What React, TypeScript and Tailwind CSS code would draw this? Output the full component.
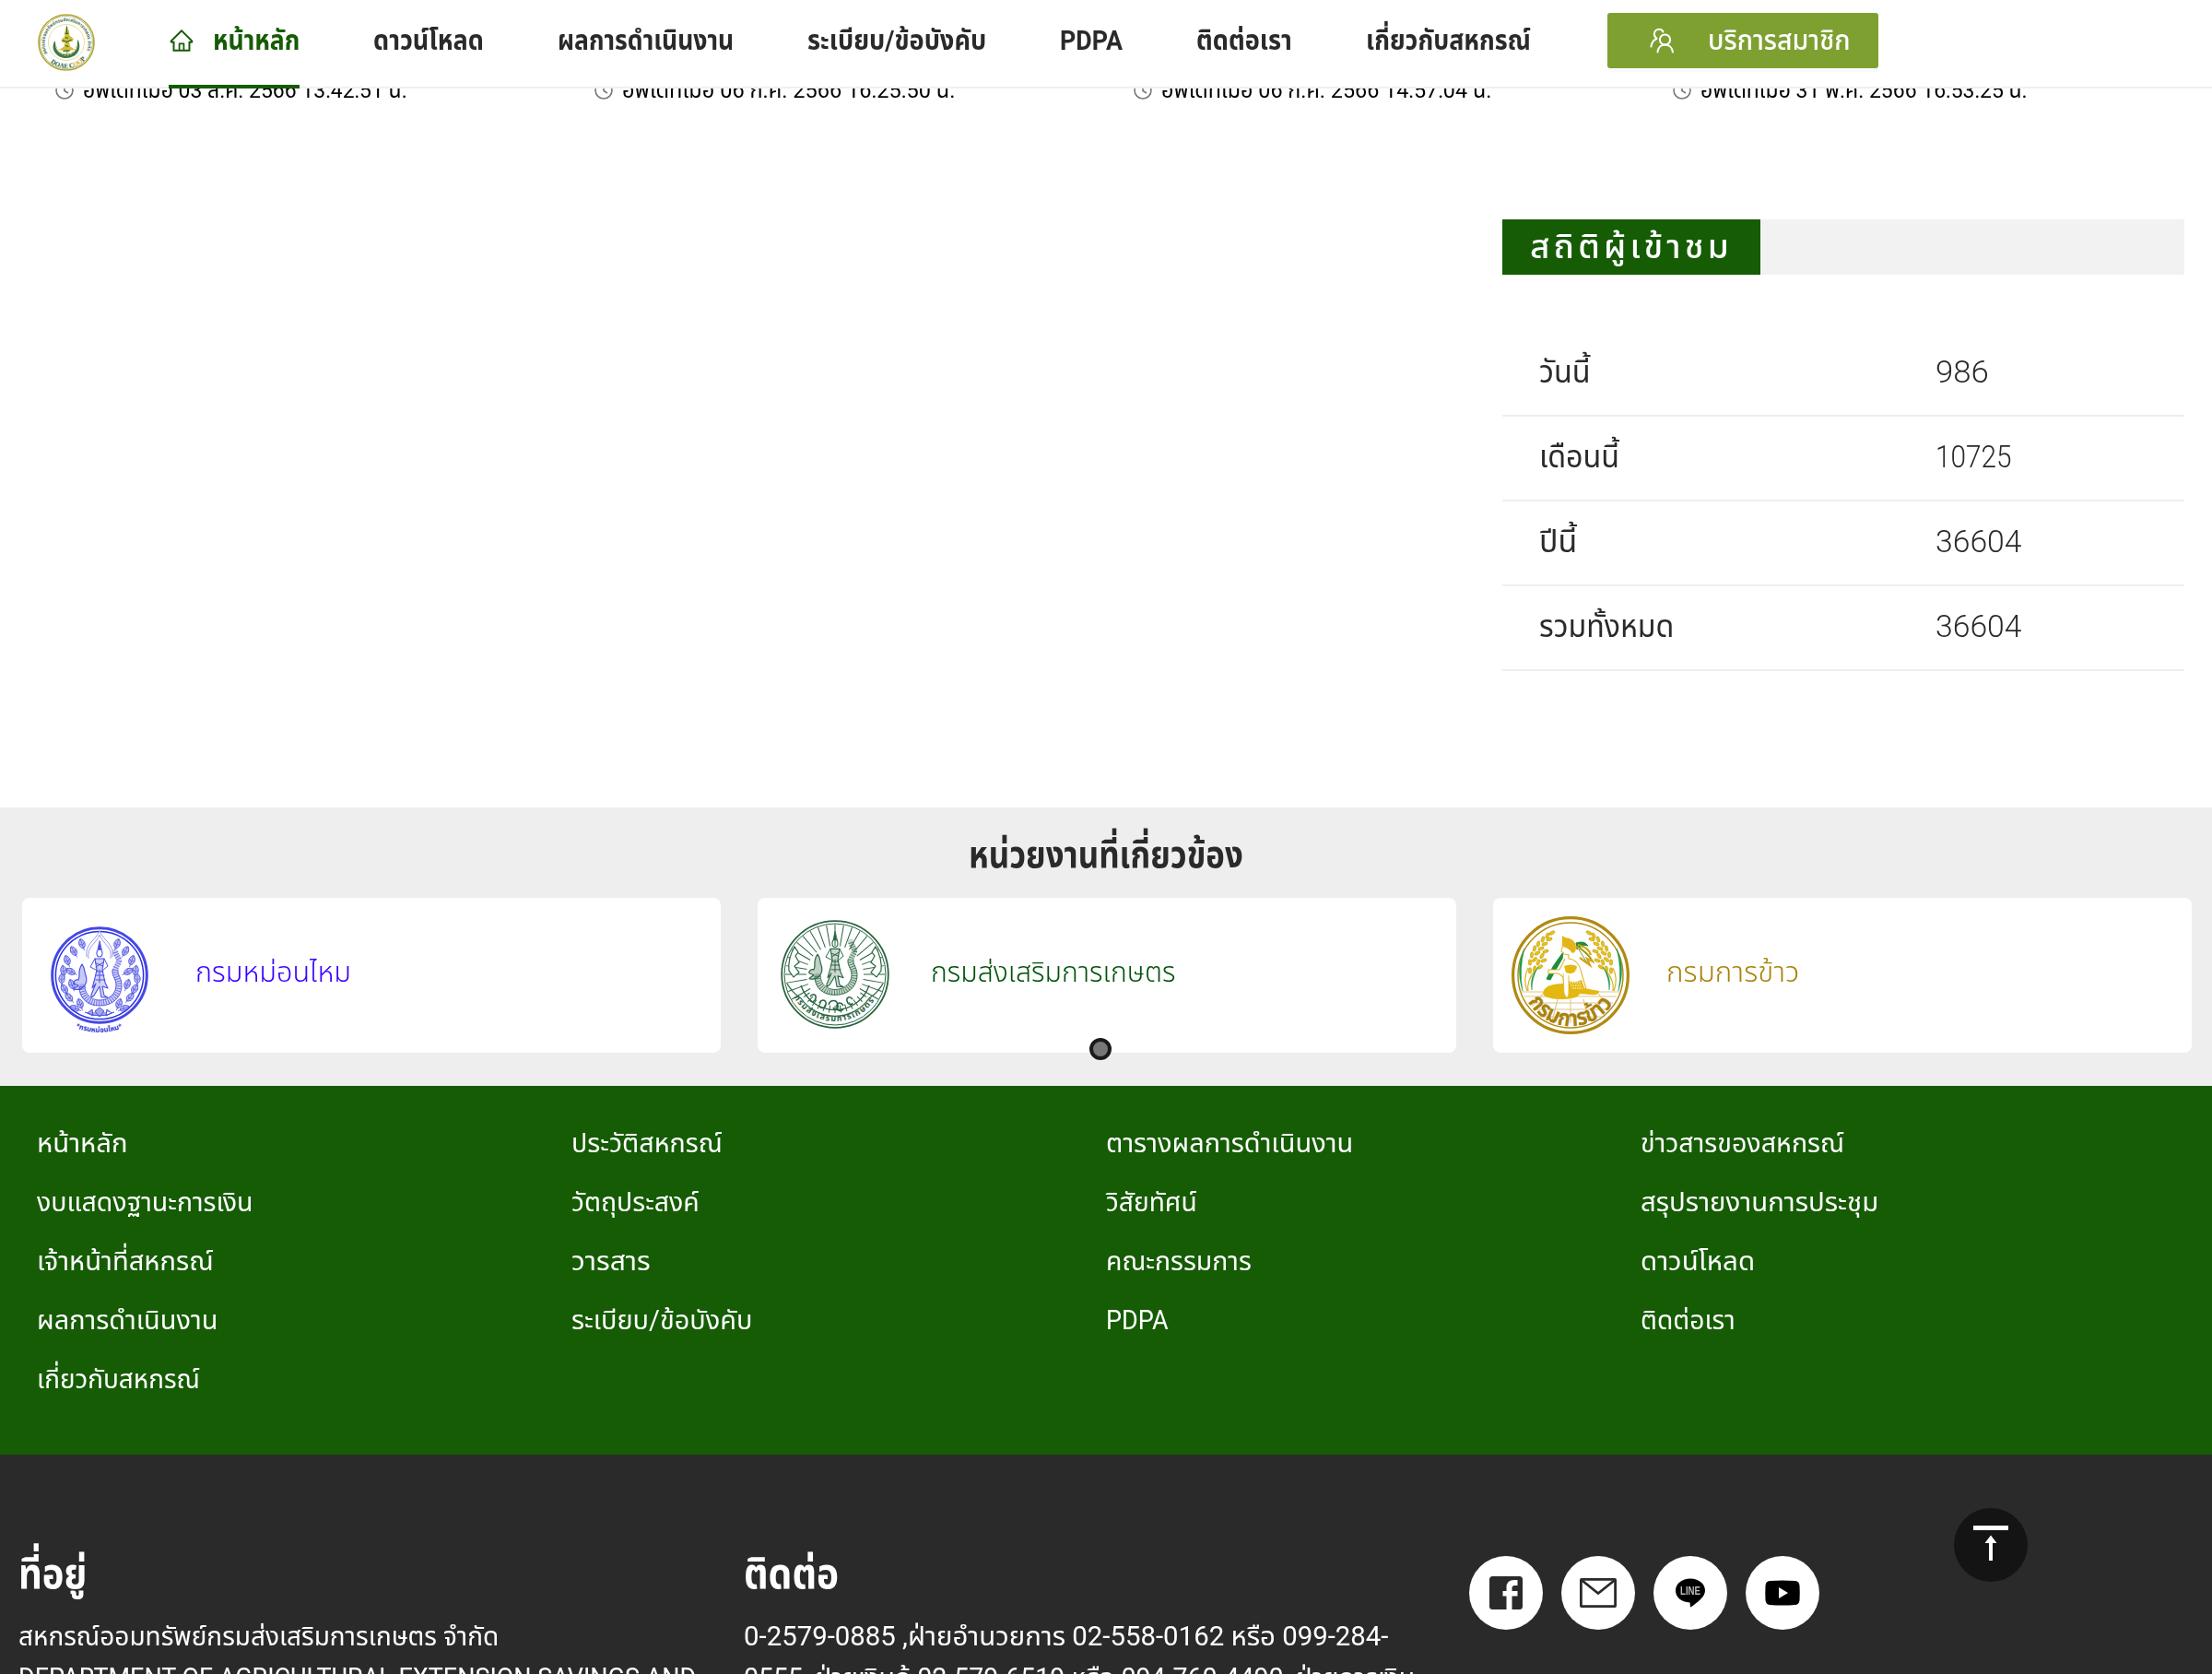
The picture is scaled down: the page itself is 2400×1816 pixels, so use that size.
import React, { useLayoutEffect, useRef, useState } from "react";
import { AiOutlineHome } from "react-icons/ai";

type FitProps = { w: number; className?: string; children: React.ReactNode };

/** Single-line label whose glyph run is condensed or widened to a set width. */
function Fit({ w, className = "", children }: FitProps) {
  const ref = useRef<HTMLSpanElement>(null);
  const [scale, setScale] = useState(1);
  useLayoutEffect(() => {
    if (ref.current) setScale(w / ref.current.offsetWidth);
  }, [w]);
  return (
    <span className={`block whitespace-nowrap ${className}`} style={{ width: w }}>
      <span ref={ref} className="inline-block origin-left" style={{ transform: `scaleX(${scale})` }}>
        {children}
      </span>
    </span>
  );
}

const nav: [string, number][] = [
  ["ดาวน์โหลด", 120],
  ["ผลการดำเนินงาน", 191],
  ["ระเบียบ/ข้อบังคับ", 194],
  ["PDPA", 68],
  ["ติดต่อเรา", 104],
  ["เกี่ยวกับสหกรณ์", 179],
];

const updates: [string, number][] = [
  ["อัพเดทเมื่อ 03 ส.ค. 2566 13:42:51 น.", 352],
  ["อัพเดทเมื่อ 06 ก.ค. 2566 16:25:50 น.", 361],
  ["อัพเดทเมื่อ 06 ก.ค. 2566 14:57:04 น.", 358],
  ["อัพเดทเมื่อ 31 พ.ค. 2566 16:53:25 น.", 355],
];

const stats: [string, number, string, number][] = [
  ["วันนี้", 56, "986", 58],
  ["เดือนนี้", 87, "10725", 83],
  ["ปีนี้", 41, "36604", 94],
  ["รวมทั้งหมด", 146, "36604", 94],
];

const links: [string, number][] = [
  ["หน้าหลัก", 99], ["ประวัติสหกรณ์", 164], ["ตารางผลการดำเนินงาน", 268], ["ข่าวสารของสหกรณ์", 221],
  ["งบแสดงฐานะการเงิน", 235], ["วัตถุประสงค์", 139], ["วิสัยทัศน์", 99], ["สรุปรายงานการประชุม", 258],
  ["เจ้าหน้าที่สหกรณ์", 192], ["วารสาร", 86], ["คณะกรรมการ", 158], ["ดาวน์โหลด", 124],
  ["ผลการดำเนินงาน", 196], ["ระเบียบ/ข้อบังคับ", 196], ["PDPA", 68], ["ติดต่อเรา", 103],
  ["เกี่ยวกับสหกรณ์", 177],
];

function Naga({ color }: { color: string }) {
  return (
    <g fill="none" stroke={color} strokeLinecap="round" strokeLinejoin="round">
      <path d="M-19 12c0 12 9 19 19 18c13 0 21-9 21-19c0-8-5-11-4-17c1-5 5-7 4-11c-1-3-3-5-4-9" strokeWidth="6" strokeOpacity=".25" />
      <path d="M-19 12c0 12 9 19 19 18c13 0 21-9 21-19c0-8-5-11-4-17c1-5 5-7 4-11c-1-3-3-5-4-9" strokeWidth="6" strokeDasharray=".9 1.7" strokeLinecap="butt" strokeOpacity=".8" />
      <path d="M-16 11c0 11 8 16 16 16c11 0 18-8 18-16c0-8-5-10-4-17" strokeWidth=".9" />
      <path d="M-22 13c0 13 10 20 22 20c15 0 24-10 24-22c0-9-5-11-4-17" strokeWidth=".9" />
      <path d="M-19-12c-6 9-1 11-4 17c-3-1-6 2-5 4l5 2c-2 2-4 2-5 4c4 1 7 1 10-2c4-4 5-8 3-13c-2-4 0-7-4-12z" fill={color} fillOpacity=".3" strokeWidth="1.2" />
      <path d="M0-37L-2-28H2Z" fill={color} strokeWidth=".8" />
      <ellipse cx="0" cy="-24" rx="3" ry="4" strokeWidth="1.1" />
      <path d="M-5-18H5L3-6L6 8L9 14L3 12L5 22L9 24H2L0 12L-6 22L-9 24V21L-4 9L-8 14L-5 3L-3-6Z" fill={color} fillOpacity=".25" strokeWidth="1.1" />
      <path d="M-5-18L-10-9L-2-5M5-18L9-10L3-5M-4-13L4-10M4-14L-4-9M-3-4H4M-4 0H5M-4 5L6 5M0-6V8" strokeWidth="1" />
    </g>
  );
}

function Leaf({ x, y, r, color, s = 1 }: { x: number; y: number; r: number; color: string; s?: number }) {
  return (
    <g transform={`translate(${x} ${y}) rotate(${r}) scale(${s})`}>
      <path d="M0-7C5-3 5 3 0 6C-5 3-5-3 0-7Z" fill={color} fillOpacity=".35" stroke={color} strokeWidth="1" />
      <path d="M0-6V9M-3-1L0 2L3-1" fill="none" stroke={color} strokeWidth=".8" />
    </g>
  );
}

function CoopLogo() {
  return (
    <svg viewBox="-31 -31 62 62" className="size-[62px]">
      <defs>
        <path id="coop-top" d="M-20.500 12A23.500 23.500 0 1 1 20.500 12" />
        <path id="coop-bottom" d="M-20 19A27 27 0 0 0 20 19" />
      </defs>
      <circle r="30" fill="#fff" stroke="#b5a52f" strokeWidth="1.600" />
      <circle r="28.500" fill="none" stroke="#7f9a54" strokeWidth=".6" />
      <circle r="19.500" fill="none" stroke="#e3d48c" strokeWidth=".8" />
      <g transform="translate(0 1) scale(.46)">
        <path d="M-27-6c-12 18 2 40 27 41c26-1 38-22 27-44c-3 10 2 22-9 29c-9 7-28 7-36 0c-9-7-6-17-9-26z" fill="#3c7a4b" />
        <path d="M-24 8c6 14 16 20 24 20s19-6 24-21" fill="none" stroke="#dccb50" strokeWidth="3" strokeDasharray="4 3" />
        <path d="M1-40l-5 14v9l-8 9 3 7 6-3-3 12-12 8 14 1 6 8 5-8 13-2-11-8-3-12 8 1 3-7-10-8v-8z" fill="#d2bd3c" />
        <path d="M1-40v18M-3-23h8M-10-7l11 4 11-5M-2 5l7 3M-8 18l16-1M-2-14l6 2" stroke="#2c6b3e" strokeWidth="2.600" fill="none" />
      </g>
      <text fontSize="5.200" fontWeight="700" fill="#4c7148">
        <textPath href="#coop-top" textLength="94" lengthAdjust="spacingAndGlyphs">สหกรณ์ออมทรัพย์กรมส่งเสริมการเกษตร จำกัด</textPath>
      </text>
      <text fontFamily="Liberation Serif" fontSize="7" fontWeight="700" fill="#23603a">
        <textPath href="#coop-bottom" startOffset="4">DOAE C<tspan fill="#dda51d">OO</tspan>P</textPath>
      </text>
    </svg>
  );
}

function SilkLogo() {
  const c = "#4a4fe0";
  const leaves: [number, number, number][] = [
    [19, -34, 20], [28, -26, 30], [35, -16, 20], [39, -5, 10], [31, -4, 60], [41, 4, 0], [30, 10, 20], [38, 15, 30], [33, 24, 40], [21, 31, 20], [27, 36, 70],
  ];
  return (
    <svg viewBox="-53 -53 106 118" className="h-[118px] w-[106px]">
      <defs><path id="silk-name" d="M-26 57Q0 67 26 57" /></defs>
      <circle r="51.300" fill="none" stroke="#4448e4" strokeWidth="3" />
      <circle r="47.600" fill="none" stroke="#2b2fe8" strokeWidth="1.500" />
      {leaves.map(([x, y, r], i) => (
        <g key={i}>
          <Leaf x={x} y={y} r={r} color={c} s={0.85} />
          <Leaf x={-x} y={y} r={-r} color={c} s={0.85} />
        </g>
      ))}
      <path d="M-12-18c-2-14 8-15 12-26c4 11 14 12 12 26M-14-20c-2-14 9-17 14-28c5 11 16 14 14 28" fill="none" stroke="#9a9dee" strokeWidth="1" />
      <Naga color={c} />
      <path d="M-16 40q16 8 32 0M0 35l-5 4 5 6 5-6zM-8 37l-5 4 6 3zM8 37l5 4-6 3z" fill={c} fillOpacity=".5" stroke={c} strokeWidth="1" />
      <text fontSize="8" fontWeight="700" fill="#2f34d8">
        <textPath href="#silk-name" textLength="52" lengthAdjust="spacingAndGlyphs">*กรมหม่อนไหม*</textPath>
      </text>
    </svg>
  );
}

function ExtensionLogo() {
  const c = "#2a6440";
  const rays = Array.from({ length: 25 }, (_, i) => -120 + i * 10);
  const low = Array.from({ length: 13 }, (_, i) => 126 + i * 9);
  return (
    <svg viewBox="-59 -59 118 118" className="size-[118px]">
      <defs><path id="ext-name" d="M-46 22A51 51 0 0 0 46 22" /></defs>
      <circle r="57.800" fill="none" stroke={c} strokeWidth="1.800" />
      <circle r="55" fill="none" stroke={c} strokeWidth="1" />
      {rays.map((a) => <path key={a} d="M0-31V-54" transform={`rotate(${a})`} stroke={c} strokeWidth="1" />)}
      {low.map((a) => <path key={a} d="M0-34V-42" transform={`rotate(${a})`} stroke={c} strokeWidth="1" />)}
      <path d="M-52 10A46 46 0 0 0-37 26A45 45 0 0 0 37 26A46 46 0 0 0 52 10M-37 12A39 39 0 0 0 37 12" fill="none" stroke={c} strokeWidth="1.300" />
      <path d="M-44-30c-5 9-7 17-6 26l5 7 6-5-5-7 5-4-4-7 3-4zM44-30c5 9 7 17 6 26l-5 7-6-5 5-7-5-4 4-7-3-4z" fill="#fff" stroke={c} strokeWidth="1.200" />
      <path d="M-27 24c3-4 7-2 6 2s-5 5-6 2m10 3c3-5 8-3 7 2s-6 4-7 1m10-1c2-6 9-6 10 0s-4 6-5 3m21-9c-3-4-7-2-6 2s5 5 6 2m-10 3c-3-5-8-3-7 2s6 4 7 1" fill="none" stroke={c} strokeWidth="1.500" />
      <g transform="translate(0 -10) scale(1 .98)"><Naga color={c} /></g>
      <text fontSize="9" fontWeight="700" fill={c}>
        <textPath href="#ext-name" startOffset="3" textLength="104" lengthAdjust="spacing">กรมส่งเสริมการเกษตร</textPath>
      </text>
    </svg>
  );
}

function RiceLogo() {
  const grains: [number, number, number][] = [
    [-20, -46, 60], [-25, -43, 20], [-23, -39, 70], [-30, -39, 20], [-28, -34, 70], [-35, -34, 10], [-32, -29, 70], [-39, -29, 10], [-36, -24, 60], [-42, -22, 5], [-39, -17, 50], [-44, -14, 0], [-27, -26, 70], [-31, -21, 30], [-29, -16, 70], [-35, -14, 20], [-33, -9, 60], [-39, -7, 10], [-44, -5, 0],
  ];
  return (
    <svg viewBox="-64 -64 128 128" className="size-[128px]">
      <defs><path id="rice-name" d="M-47 27A54 54 0 0 0 48 27" /></defs>
      <circle r="62.400" fill="#fff" stroke="#b08a12" strokeWidth="3.200" />
      <circle r="57" fill="none" stroke="#b08a12" strokeWidth="1.400" />
      {[1, -1].map((s) => (
        <g key={s} transform={`scale(${s} 1)`}>
          {grains.map(([x, y, r], i) => (
            <ellipse key={i} cx={x} cy={y} rx="1.700" ry="3.300" fill="#e6c21b" stroke="#b8960f" strokeWidth=".5" transform={`rotate(${r} ${x} ${y})`} />
          ))}
          <path d="M-46-8Q-52 4-47 17M-38-6Q-48 6-46 17" fill="none" stroke="#d8b426" strokeWidth="1.200" />
          <path d="M-50-29Q-60-8-52 17Q-56-6-50-29ZM-35-9Q-45 2-42 16Q-42 2-35-9Z" fill="#1f9a4a" stroke="#1f9a4a" strokeWidth=".5" />
        </g>
      ))}
      <path d="M-54 18H-30M30 18H54M-50 23H50M-46 30H46M-40 37H40M-34 45H34M0 26V52M-14 26L-20 50M14 26L20 50M-30 20L-42 34M30 20L42 34" stroke="#dcc78a" strokeWidth="1.100" />
      <path d="M6-35Q15-38 19-32Q13-34 7-28ZM-8-25Q-20-10-26 4L-22 5Q-15-8-9-18Z" fill="#1d8c3f" stroke="#1d8c3f" />
      <path d="M6-31Q18-26 24-15L18-18L21-11L10-19M8-33Q20-30 22-22" fill="none" stroke="#d0a616" strokeWidth="2.200" />
      <path d="M9-32L22-18M9-28L17-15" stroke="#5d8f2c" strokeWidth=".9" />
      <path d="M-9-43L-6-41Q5-40 6-31Q6-24 2-24Q-2-30-9-31Z" fill="#e5b41a" />
      <path d="M-9-31L-10-26L-7-23L-2-22L-2-18Q9-17 12-2L17 15L-2 17L-7 22L-8 2L-13-2L-24-2L-24-6L-12-6L-6-18" fill="#fff" stroke="#dfb62b" strokeWidth="1.100" />
      <path d="M-7-10Q0-13 7-10L6-5Q2 0-5-3ZM-8 4Q3 10 12 5L15 14L31 17Q32 22 21 21L10 20Q8 26-12 26Q-30 25-30 19Q-28 9-8 9L-5 20L-4 8Z" fill="#e5b811" />
      <path d="M-1 8H11M0 11H12M2 14H13M5-6L9 4" stroke="#fff" strokeDasharray="1.500 1" />
      <path d="M-8-2L-7 20L-4 25L-2 21L-2 0" fill="#fff" stroke="#dfb62b" strokeWidth=".9" />
      <text fontSize="25" fontWeight="700" fill="#a9830f">
        <textPath href="#rice-name" startOffset="2" textLength="110" lengthAdjust="spacingAndGlyphs">กรมการข้าว</textPath>
      </text>
    </svg>
  );
}

const agencies = [
  { name: "กรมหม่อนไหม", w: 169, color: "text-[#3a00ff]", logo: <SilkLogo />, pad: "pl-[31px] pt-[31px]" },
  { name: "กรมส่งเสริมการเกษตร", w: 265, color: "text-[#00520a]", logo: <ExtensionLogo />, pad: "pl-[25px] pt-6" },
  { name: "กรมการข้าว", w: 144, color: "text-[#a8830a]", logo: <RiceLogo />, pad: "pl-5 pt-5" },
];

function Round({ children }: { children: React.ReactNode }) {
  return <span className="flex size-20 items-center justify-center rounded-full bg-white">{children}</span>;
}

export default function App() {
  return (
    <div className="relative h-[1816px] w-[2400px] overflow-hidden bg-white font-['Roboto','Noto_Sans_Thai',sans-serif] text-[#2a2a2a]">
      <header className="relative z-10 flex h-24 border-b-2 border-[#f0f0f0] bg-white">
        <div className="ml-[41px] mt-[15px] size-[62px]"><CoopLogo /></div>
        <nav className="ml-[80px] flex h-24 gap-20 text-[30px] font-bold leading-[88px]">
          <a className="flex h-24 w-[142px] gap-5 border-b-4 border-[#155c05] text-[#155c05]">
            <AiOutlineHome className="mt-[30px] size-7 shrink-0" />
            <Fit w={94}>หน้าหลัก</Fit>
          </a>
          {nav.map(([t, w]) => <a key={t}><Fit w={w}>{t}</Fit></a>)}
        </nav>
        <a className="ml-[83px] mt-3.5 flex h-[60px] w-[294px] rounded-[3px] bg-[#7ea031] pl-[46px] text-[30px] leading-[60px] text-white shadow-[0_4px_0_#fafafa]">
          <svg viewBox="0 0 28 28" className="mt-4 size-7" fill="none" stroke="currentColor" strokeWidth="2" strokeLinecap="round">
            <circle cx="16.500" cy="13" r="5.600" />
            <path d="M8.500 26.500c.4-4.800 3.500-7.900 8-7.900s7.800 3.100 8.500 7.900M14.500 4.500C13.500 2.500 12 1.800 10.200 1.800C7 1.800 4.900 4.100 4.900 7C4.900 9 6 10.800 7.600 11.800M7.400 12C4.200 13.300 2 16.400 1.400 20.500" />
          </svg>
          <Fit w={155} className="ml-[35px] font-medium">บริการสมาชิก</Fit>
        </a>
      </header>

      <section className="-mt-4 flex h-9 pl-[60px] text-[24px] leading-9 text-black">
        {updates.map(([t, w]) => (
          <div key={t} className="flex w-[585px] gap-2.5">
            <svg viewBox="0 0 20 20" className="mt-2 size-5" fill="none" stroke="#777" strokeWidth="1.600">
              <circle cx="10" cy="10" r="9" /><path d="M10 4.500V10.500L14 13" />
            </svg>
            <Fit w={w}>{t}</Fit>
          </div>
        ))}
      </section>

      <section className="ml-[1630px] mt-[122px] h-[638px] w-[740px]">
        <h2 className="flex h-[60px] bg-[#f2f2f2]">
          <span className="h-[60px] w-[280px] bg-[#155c05] pl-[30px] text-[35px] font-medium leading-[61px] tracking-[4px] text-white">
            <Fit w={220}>สถิติผู้เข้าชม</Fit>
          </span>
        </h2>
        <div className="mt-[62px]">
          {stats.map(([l, lw, v, vw], i) => (
            <div key={i} className="flex h-[92px] border-b-2 border-[#eee] pl-10 text-[33px] leading-[88px]">
              <div className="w-[430px]"><Fit w={lw}>{l}</Fit></div>
              <Fit w={vw} className="font-[350]">{v}</Fit>
            </div>
          ))}
        </div>
      </section>

      <section className="relative h-[302px] bg-[#eee]">
        <h2 className="flex h-[98px] justify-center text-[41px] font-bold leading-[103px]">
          <Fit w={298}>หน่วยงานที่เกี่ยวข้อง</Fit>
        </h2>
        <div className="flex gap-10 pl-6">
          {agencies.map((a) => (
            <div key={a.name} className="flex h-[168px] w-[758px] rounded-lg bg-white">
              <div className={`w-[188px] ${a.pad}`}>{a.logo}</div>
              <Fit w={a.w} className={`text-[31px] font-[350] leading-[162px] ${a.color}`}>{a.name}</Fit>
            </div>
          ))}
        </div>
        <span className="absolute left-[1182px] top-[250px] size-6 rounded-full border-4 border-[#1a1a1a] bg-[#777]" />
      </section>

      <section className="h-[400px] bg-[#155c05] pl-10 pt-[30px] text-[29px] leading-[64px] text-white">
        <div className="grid grid-cols-[580px_580px_580px_580px]">
          {links.map(([t, w], i) => <a key={i} className="h-16"><Fit w={w}>{t}</Fit></a>)}
        </div>
      </section>

      <footer className="flex h-[238px] overflow-hidden bg-[#2a2a2a] pl-5 pt-[99px] text-[29px] leading-[45px] text-white">
        <div className="w-[787px]">
          <h3 className="h-[76px] text-[47px] font-bold leading-[60px]"><Fit w={74}>ที่อยู่</Fit></h3>
          <Fit w={521}>สหกรณ์ออมทรัพย์กรมส่งเสริมการเกษตร จำกัด</Fit>
          <Fit w={735}>DEPARTMENT OF AGRICULTURAL EXTENSION SAVINGS AND</Fit>
        </div>
        <div className="w-[787px]">
          <h3 className="h-[76px] text-[47px] font-bold leading-[60px]"><Fit w={103}>ติดต่อ</Fit></h3>
          <Fit w={699}>0-2579-0885 ,ฝ่ายอำนวยการ 02-558-0162 หรือ 099-284-</Fit>
          <Fit w={728}>0555, ฝ่ายเงินกู้ 02-579-6519 หรือ 094-760-4490, ฝ่ายการเงิน</Fit>
        </div>
        <div className="mt-[11px] flex gap-5">
          <Round>
            <svg viewBox="0 0 36 36" className="size-9">
              <rect width="36" height="36" rx="3.500" fill="#2a2a2a" />
              <path d="M18.500 36V21.500H14.500V16H18.500V12Q18.500 4 27 4H30.500V10H27.500Q24.500 10 24.500 12.500V16H30.500V21.500H24.500V36Z" fill="#fff" />
            </svg>
          </Round>
          <Round>
            <svg viewBox="0 0 40 32" className="h-8 w-10" fill="none" stroke="#2a2a2a" strokeWidth="2.800">
              <rect x="1.400" y="1.400" width="37.200" height="29.200" rx=".5" /><path d="M2.500 2.500L20 16.500L37.500 2.500" />
            </svg>
          </Round>
          <Round>
            <svg viewBox="0 0 34 34" className="size-[34px] blur-[0.600px]">
              <path d="M17 1.500C26 1.500 33 7 33 14.500C33 21.500 25 27 17.500 32.500C16.500 32.500 17 29.500 16.500 27.500C7 27 1 21.500 1 14.500C1 7 8 1.500 17 1.500Z" fill="#000" />
              <text x="6" y="19" fontFamily="Liberation Sans" fontSize="12" fontWeight="700" fill="#bbb" textLength="22" lengthAdjust="spacingAndGlyphs">LINE</text>
            </svg>
          </Round>
          <Round>
            <svg viewBox="0 0 38 28" className="h-7 w-[38px]">
              <path d="M5 1Q19 0 33 1Q37 1.500 37.500 6Q38 14 37.500 22Q37 26.500 33 27Q19 28 5 27Q1 26.500 .5 22Q0 14 .5 6Q1 1.500 5 1Z" fill="#000" />
              <path d="M15 8L25 14L15 20Z" fill="#fff" />
            </svg>
          </Round>
        </div>
      </footer>

      <button className="absolute left-[2120px] top-[1636px] flex size-20 items-start justify-center rounded-full bg-[#141414]">
        <svg viewBox="0 0 40 40" className="mt-[18px] size-10 fill-white">
          <path d="M1 1H39V6H1ZM18 39V20H13.500L20 11.500L26.500 20H22V39Z" />
        </svg>
      </button>
    </div>
  );
}
